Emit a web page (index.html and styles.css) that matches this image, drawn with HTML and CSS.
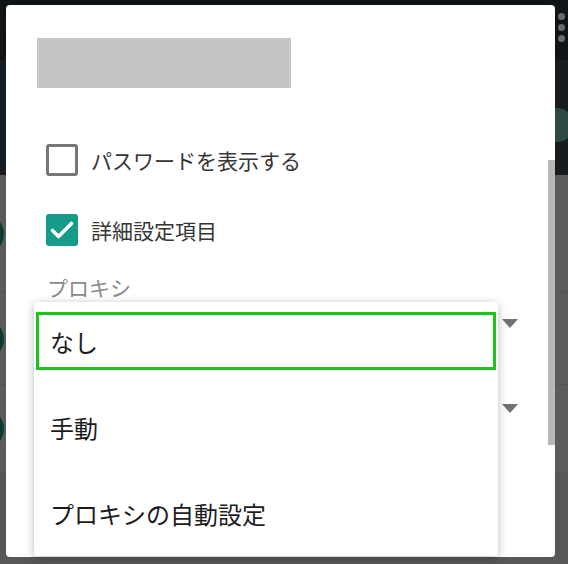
FILE: index.html
```html
<!DOCTYPE html>
<html lang="ja">
<head>
<meta charset="utf-8">
<title>プロキシ設定</title>
<link rel="stylesheet" href="styles.css">
</head>
<body>
<div class="screen">
  <div class="appbar">
    <span class="back-chevron"></span>
    <div class="more-dots"><i></i><i></i><i></i></div>
    <span class="fab-edge"></span>
  </div>
  <div class="list">
    <div class="list-row row-a"><span class="avatar"></span></div>
    <div class="list-row row-b"><span class="avatar"></span></div>
    <div class="list-row row-c"><span class="avatar"></span></div>
    <div class="list-row row-d"></div>
  </div>

  <div class="dialog">
    <div class="title-placeholder"></div>
    <div class="form">
      <label class="check-row">
        <span class="checkbox"></span>
        <span class="check-label">パスワードを表示する</span>
      </label>
      <label class="check-row second">
        <span class="checkbox checked">
          <svg viewBox="0 0 32 32" width="32" height="32"><path d="M6.5 16.5 L12.5 22.5 L25.5 9.5" fill="none" stroke="#fff" stroke-width="3.6" stroke-linecap="round" stroke-linejoin="round"/></svg>
        </span>
        <span class="check-label">詳細設定項目</span>
      </label>
      <div class="field-label">プロキシ</div>
      <div class="select"><span class="arrow"></span></div>
      <div class="select second-select"><span class="arrow"></span></div>
    </div>
    <div class="scrollbar"></div>
  </div>

  <div class="menu">
    <div class="menu-item selected">なし</div>
    <div class="menu-item">手動</div>
    <div class="menu-item">プロキシの自動設定</div>
  </div>
</div>
</body>
</html>
```

FILE: styles.css
```css
html, body {
  margin: 0;
  padding: 0;
}

body {
  width: 568px;
  height: 564px;
  overflow: hidden;
  font-family: "Noto Sans CJK JP", "Noto Sans", sans-serif;
}

.screen {
  position: relative;
  width: 568px;
  height: 564px;
  overflow: hidden;
  background: #5b5b5b;
  display: flex;
  flex-direction: column;
}

/* background app */
.appbar {
  position: relative;
  height: 175px;
  flex: none;
  background: linear-gradient(#101416 0, #101416 60px, #161c20 60px, #161c20 175px);
}

.back-chevron {
  position: absolute;
  left: -6px;
  top: 19px;
  width: 8px;
  height: 8px;
  border-left: 2px solid #6a6e70;
  border-bottom: 2px solid #6a6e70;
  transform: rotate(45deg);
}

.more-dots {
  position: absolute;
  left: 558px;
  top: 13px;
  display: flex;
  flex-direction: column;
  gap: 4px;
}

.more-dots i {
  display: block;
  width: 7px;
  height: 7px;
  border-radius: 50%;
  background: #6b6b6b;
}

.fab-edge {
  position: absolute;
  left: 540px;
  top: 108px;
  width: 34px;
  height: 34px;
  border-radius: 50%;
  background: #2e4943;
}

.list {
  flex: 1;
  display: flex;
  flex-direction: column;
}

.list-row {
  display: flex;
  align-items: center;
  border-bottom: 1px solid #535353;
  flex: none;
}

.row-a { height: 117px; }
.row-b { height: 91px; }
.row-c { height: 88px; }
.row-d { flex: 1; border-bottom: 0; background: #575757; }

.avatar {
  width: 40px;
  height: 40px;
  border-radius: 50%;
  background: #0d3b34;
  margin-left: -36px;
}

/* dialog */
.dialog {
  position: absolute;
  left: 6px;
  top: 5px;
  width: 549px;
  height: 552px;
  background: #ffffff;
  border-radius: 4px;
}

.title-placeholder {
  margin: 33px 0 0 31px;
  width: 254px;
  height: 50px;
  background: #c5c5c5;
}

.form {
  padding: 0 37px 0 40px;
  display: flex;
  flex-direction: column;
}

.check-row {
  display: flex;
  align-items: center;
  height: 32px;
  margin-top: 56px;
}

.check-row.second {
  margin-top: 38px;
}

.checkbox {
  box-sizing: border-box;
  width: 32px;
  height: 32px;
  flex: none;
  border: 3px solid #767676;
  border-radius: 3px;
  display: flex;
}

.checkbox.checked {
  border: 0;
  background: #169b8b;
}

.check-label {
  margin-left: 13px;
  font-size: 21px;
  line-height: 32px;
  color: #363636;
}

.field-label {
  margin-top: 29px;
  padding-left: 1px;
  font-size: 21px;
  line-height: 24px;
  color: #8a8a8a;
}

.select {
  height: 40px;
  margin-top: 4px;
  display: flex;
  align-items: center;
  justify-content: flex-end;
}

.select.second-select {
  margin-top: 45px;
}

.arrow {
  width: 0;
  height: 0;
  border-left: 8px solid transparent;
  border-right: 8px solid transparent;
  border-top: 9px solid #727272;
}

.scrollbar {
  position: absolute;
  right: 0;
  top: 155px;
  width: 7px;
  height: 285px;
  background: #b7b7b7;
}

/* dropdown menu */
.menu {
  position: absolute;
  left: 34px;
  top: 302px;
  width: 464px;
  height: 254px;
  box-sizing: border-box;
  padding: 10px 2px;
  background: #ffffff;
  border-radius: 3px;
  box-shadow: 0 2px 10px rgba(0, 0, 0, 0.28);
  display: flex;
  flex-direction: column;
  gap: 28px;
}

.menu-item {
  box-sizing: border-box;
  height: 58px;
  flex: none;
  border: 3px solid transparent;
  padding-left: 11px;
  display: flex;
  align-items: center;
  font-size: 24px;
  color: #1c1c1c;
}

.menu-item.selected {
  border-color: #1fc21f;
}
```
